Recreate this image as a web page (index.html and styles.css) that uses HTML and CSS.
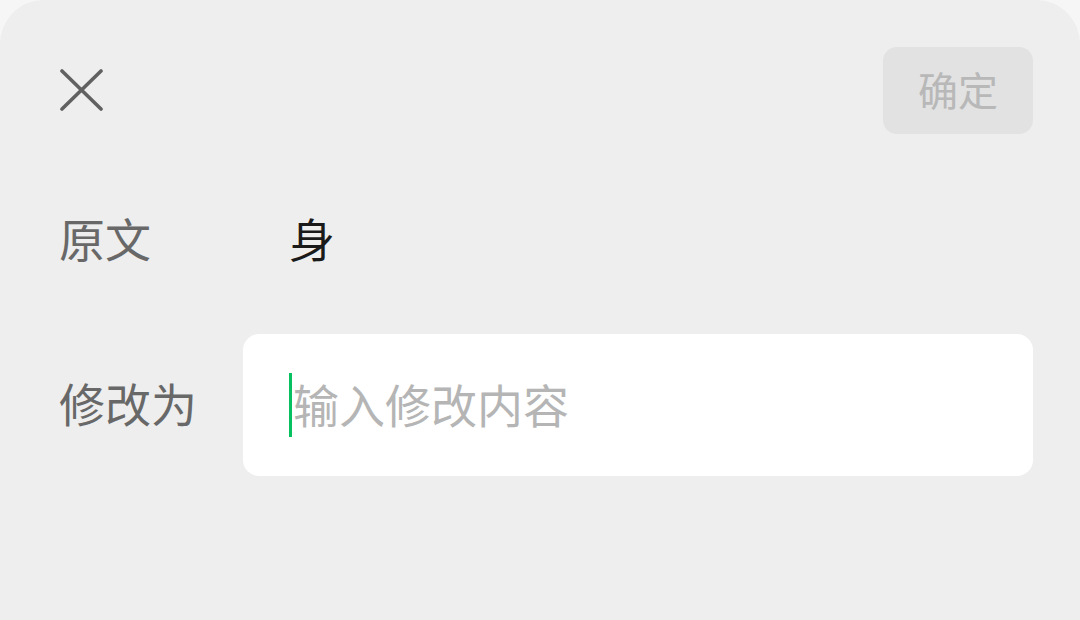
FILE: index.html
```html
<!DOCTYPE html>
<html lang="zh">
<head>
<meta charset="utf-8">
<link rel="stylesheet" href="styles.css">
</head>
<body>
<div class="sheet">
  <div class="header">
    <button class="close" aria-label="关闭">
      <svg width="44" height="44" viewBox="0 0 44 44"><path d="M3 3 L42 41 M42 3 L3 41" stroke="#616161" stroke-width="3.6" stroke-linecap="round" fill="none"/></svg>
    </button>
    <button class="confirm">确定</button>
  </div>
  <div class="form">
    <div class="label">原文</div>
    <div class="value">身</div>
    <div class="label">修改为</div>
    <div class="input"><span class="caret"></span><span class="placeholder">输入修改内容</span></div>
  </div>
</div>
</body>
</html>
```
FILE: styles.css
```css
html, body {
  margin: 0;
  padding: 0;
  background: #f6f6f6;
}
body {
  font-family: "Noto Sans CJK SC", "Noto Sans", sans-serif;
}
.sheet {
  height: 620px;
  box-sizing: border-box;
  background: #eeeeee;
  border-radius: 44px 44px 0 0;
  padding: 47px 47px 0 59px;
}
.header {
  display: flex;
  justify-content: space-between;
  align-items: center;
  height: 87px;
}
.close {
  background: none;
  border: none;
  padding: 0;
  width: 44px;
  height: 44px;
  display: flex;
  margin-top: -1px;
}
.confirm {
  width: 150px;
  height: 87px;
  border: none;
  border-radius: 14px;
  background: #e2e2e2;
  color: #b8b8b8;
  font-family: inherit;
  font-size: 40px;
  padding: 0 0 3px;
}
.form {
  display: grid;
  grid-template-columns: 184px 1fr;
  grid-template-rows: 136px 142px;
  row-gap: 26px;
  align-items: center;
  margin-top: 38px;
}
.label {
  font-size: 46px;
  color: #686868;
  line-height: 1;
  padding-bottom: 7px;
}
.value {
  font-size: 46px;
  color: #1a1a1a;
  line-height: 1;
  padding-left: 46px;
  padding-bottom: 7px;
}
.input {
  height: 142px;
  background: #ffffff;
  border-radius: 16px;
  display: flex;
  align-items: center;
  padding-left: 46px;
}
.caret {
  width: 3px;
  height: 64px;
  background: #07c160;
  margin-right: 1px;
}
.placeholder {
  font-size: 46px;
  color: #b5b5b5;
  line-height: 1;
  padding-bottom: 5px;
}
```
